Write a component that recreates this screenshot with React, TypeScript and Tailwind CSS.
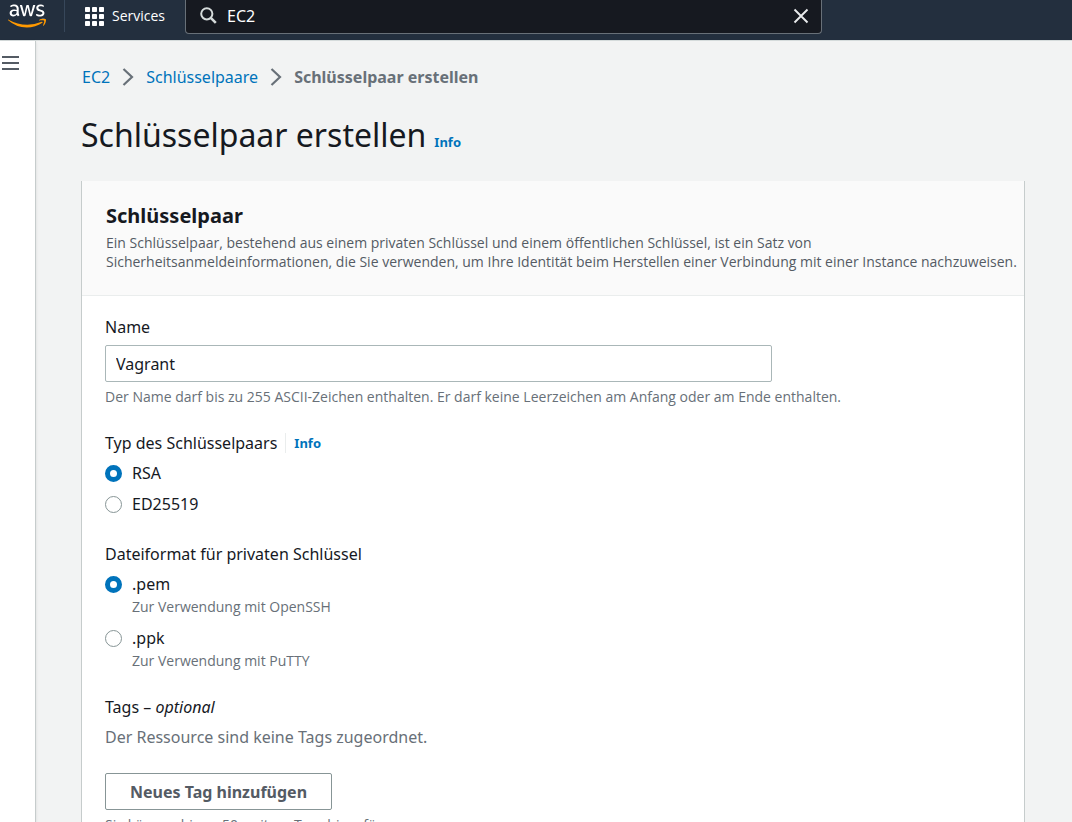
import { useState } from "react";
import { FaAws } from "react-icons/fa";

function Chevron() {
  return (
    <svg viewBox="0 0 12 18" className="h-[18px] w-3 shrink-0" fill="none" stroke="#687078" strokeWidth="2.2" aria-hidden="true">
      <path d="M1.5 1 L10 9 L1.5 17" />
    </svg>
  );
}

function Header() {
  const [query, setQuery] = useState("EC2");
  return (
    <header className="flex h-10 shrink-0 items-start bg-[#232f3e] text-white">
      <a href="#home" aria-label="AWS" className="flex h-8 w-[65px] shrink-0 items-start border-r border-[#37475a] pl-2">
        <svg className="absolute size-0" aria-hidden="true">
          <linearGradient id="aws-fill" gradientUnits="userSpaceOnUse" x1="0" y1="0" x2="0" y2="512">
            <stop offset="0.61" stopColor="#ffffff" />
            <stop offset="0.61" stopColor="#ff9900" />
          </linearGradient>
        </svg>
        <FaAws className="h-8 w-[38px] fill-[url(#aws-fill)]" />
      </a>
      <button type="button" className="flex h-8 w-[120px] shrink-0 items-center gap-2 pl-5 font-['Open_Sans','Noto_Sans',sans-serif] text-sm font-medium">
        <svg viewBox="0 0 19 19" className="size-[19px]" fill="#fff" aria-hidden="true">
          {[0, 7, 14].map((y) => [0, 7, 14].map((x) => <rect key={`${x}-${y}`} x={x} y={y} width="5" height="5" rx="0.8" />))}
        </svg>
        Services
      </button>
      <div className="flex h-[34px] w-[637px] min-w-0 items-center rounded-b-sm border border-t-0 border-[#687078] bg-[#161920] pr-3 pb-0.5 pl-3.5">
        <svg viewBox="0 0 17 17" className="size-[17px] shrink-0" fill="none" stroke="#d5dbdb" strokeWidth="2" aria-hidden="true">
          <circle cx="6.8" cy="6.8" r="5.6" />
          <path d="M10.8 10.8 L15.8 15.8" strokeWidth="2.6" />
        </svg>
        <input
          aria-label="Suche"
          value={query}
          onChange={(e) => setQuery(e.target.value)}
          className="ml-2.5 min-w-0 flex-1 bg-transparent text-base leading-6 text-white outline-none"
        />
        <button type="button" aria-label="Suche leeren" onClick={() => setQuery("")}>
          <svg viewBox="0 0 16 16" className="size-4" fill="none" stroke="#e9ebed" strokeWidth="1.9" aria-hidden="true">
            <path d="M1.5 1.5 L14.5 14.5 M14.5 1.5 L1.5 14.5" />
          </svg>
        </button>
      </div>
    </header>
  );
}

type RadioProps = {
  name: string;
  value: string;
  label: string;
  hint?: string;
  selected: string;
  onSelect: (value: string) => void;
};

function Radio({ name, value, label, hint, selected, onSelect }: RadioProps) {
  return (
    <div>
      <label className="flex w-fit items-center gap-2.5 leading-6">
        <input
          type="radio"
          name={name}
          value={value}
          checked={selected === value}
          onChange={() => onSelect(value)}
          className="size-[17px] appearance-none rounded-full border border-[#879596] bg-white checked:border-5 checked:border-[#0073bb]"
        />
        {label}
      </label>
      {hint && (
        <p className="pt-px pl-[27px] font-['Open_Sans','Noto_Sans',sans-serif] text-sm leading-5 text-[#687078]">{hint}</p>
      )}
    </div>
  );
}

function Info() {
  return (
    <a href="#info" className="text-[13px] font-bold text-[#0073bb]">
      Info
    </a>
  );
}

export default function App() {
  const [name, setName] = useState("Vagrant");
  const [keyType, setKeyType] = useState("rsa");
  const [format, setFormat] = useState("pem");

  return (
    <div className="flex h-screen flex-col overflow-hidden bg-[#f2f3f3] font-['Noto_Sans',sans-serif] text-[#16191f]">
      <Header />
      <div className="flex min-h-0 flex-1 border-t border-[#d5dbdb]">
        <aside className="w-9 shrink-0 border-r border-[#c6cccc] bg-white pt-3.5 pl-0.5 shadow-sm">
          <button type="button" aria-label="Navigation öffnen" className="block">
            <svg viewBox="0 0 17 15" className="h-[15px] w-[17px]" fill="none" stroke="#545b64" strokeWidth="2" aria-hidden="true">
              <path d="M0 2 H17 M0 8 H17 M0 14 H17" />
            </svg>
          </button>
        </aside>
        <main className="min-w-0 flex-1 pr-[47px] pl-[45px]">
          <nav aria-label="Brotkrumen" className="mt-6 flex h-6 items-center gap-3 pl-px">
            <a href="#ec2" className="text-[#0073bb]">EC2</a>
            <Chevron />
            <a href="#keypairs" className="text-[#0073bb]">Schlüsselpaare</a>
            <Chevron />
            <span className="font-bold text-[#687078]">Schlüsselpaar erstellen</span>
          </nav>
          <div className="mt-[26px] flex items-baseline gap-2 leading-10">
            <h1 className="text-[32px]">Schlüsselpaar erstellen</h1>
            <Info />
          </div>

          <section className="mt-[19px] border-x border-[#c6cccc] bg-white">
            <div className="border-b border-[#eaeded] bg-[#fafafa] pt-[18px] pr-1 pb-6 pl-6">
              <h2 className="text-xl leading-[34px] font-bold">Schlüsselpaar</h2>
              <p className="font-['Open_Sans','Noto_Sans',sans-serif] text-sm leading-[19px] text-[#545b64]">
                Ein Schlüsselpaar, bestehend aus einem privaten Schlüssel und einem öffentlichen Schlüssel, ist ein Satz von
                <br />
                Sicherheitsanmeldeinformationen, die Sie verwenden, um Ihre Identität beim Herstellen einer Verbindung mit einer Instance nachzuweisen.
              </p>
            </div>
            <form className="px-[23px] pt-[19px] pb-6 text-base leading-6" onSubmit={(e) => e.preventDefault()}>
              <label htmlFor="key-name" className="block">Name</label>
              <input
                id="key-name"
                value={name}
                onChange={(e) => setName(e.target.value)}
                aria-describedby="key-name-hint"
                className="mt-1.5 block h-[37px] w-3/4 max-w-[667px] rounded-xs border border-[#aab7b8] px-2.5 outline-none"
              />
              <p id="key-name-hint" className="mt-[5px] font-['Open_Sans','Noto_Sans',sans-serif] text-sm leading-5 text-[#687078]">
                Der Name darf bis zu 255 ASCII-Zeichen enthalten. Er darf keine Leerzeichen am Anfang oder am Ende enthalten.
              </p>

              <fieldset className="mt-6">
                <legend className="flex items-center">
                  Typ des Schlüsselpaars
                  <span className="ml-2 flex h-5 items-center border-l border-[#eaeded] pl-2">
                    <Info />
                  </span>
                </legend>
                <div className="flex flex-col gap-[7px] pt-1.5">
                  <Radio name="type" value="rsa" label="RSA" selected={keyType} onSelect={setKeyType} />
                  <Radio name="type" value="ed25519" label="ED25519" selected={keyType} onSelect={setKeyType} />
                </div>
              </fieldset>

              <fieldset className="mt-[26px]">
                <legend>Dateiformat für privaten Schlüssel</legend>
                <div className="flex flex-col gap-[9px] pt-1.5">
                  <Radio name="format" value="pem" label=".pem" hint="Zur Verwendung mit OpenSSH" selected={format} onSelect={setFormat} />
                  <Radio name="format" value="ppk" label=".ppk" hint="Zur Verwendung mit PuTTY" selected={format} onSelect={setFormat} />
                </div>
              </fieldset>

              <h3 className="mt-6">
                Tags – <i>optional</i>
              </h3>
              <p className="mt-1.5 text-[#687078]">Der Ressource sind keine Tags zugeordnet.</p>
              <button type="button" className="mt-6 block h-[37px] rounded-xs border border-[#879596] px-6 font-bold text-[#545b64]">
                Neues Tag hinzufügen
              </button>
              <p className="mt-[5px] font-['Open_Sans','Noto_Sans',sans-serif] text-sm leading-5 text-[#687078]">
                Sie können bis zu 50 weitere Tags hinzufügen.
              </p>
            </form>
          </section>
        </main>
      </div>
    </div>
  );
}
